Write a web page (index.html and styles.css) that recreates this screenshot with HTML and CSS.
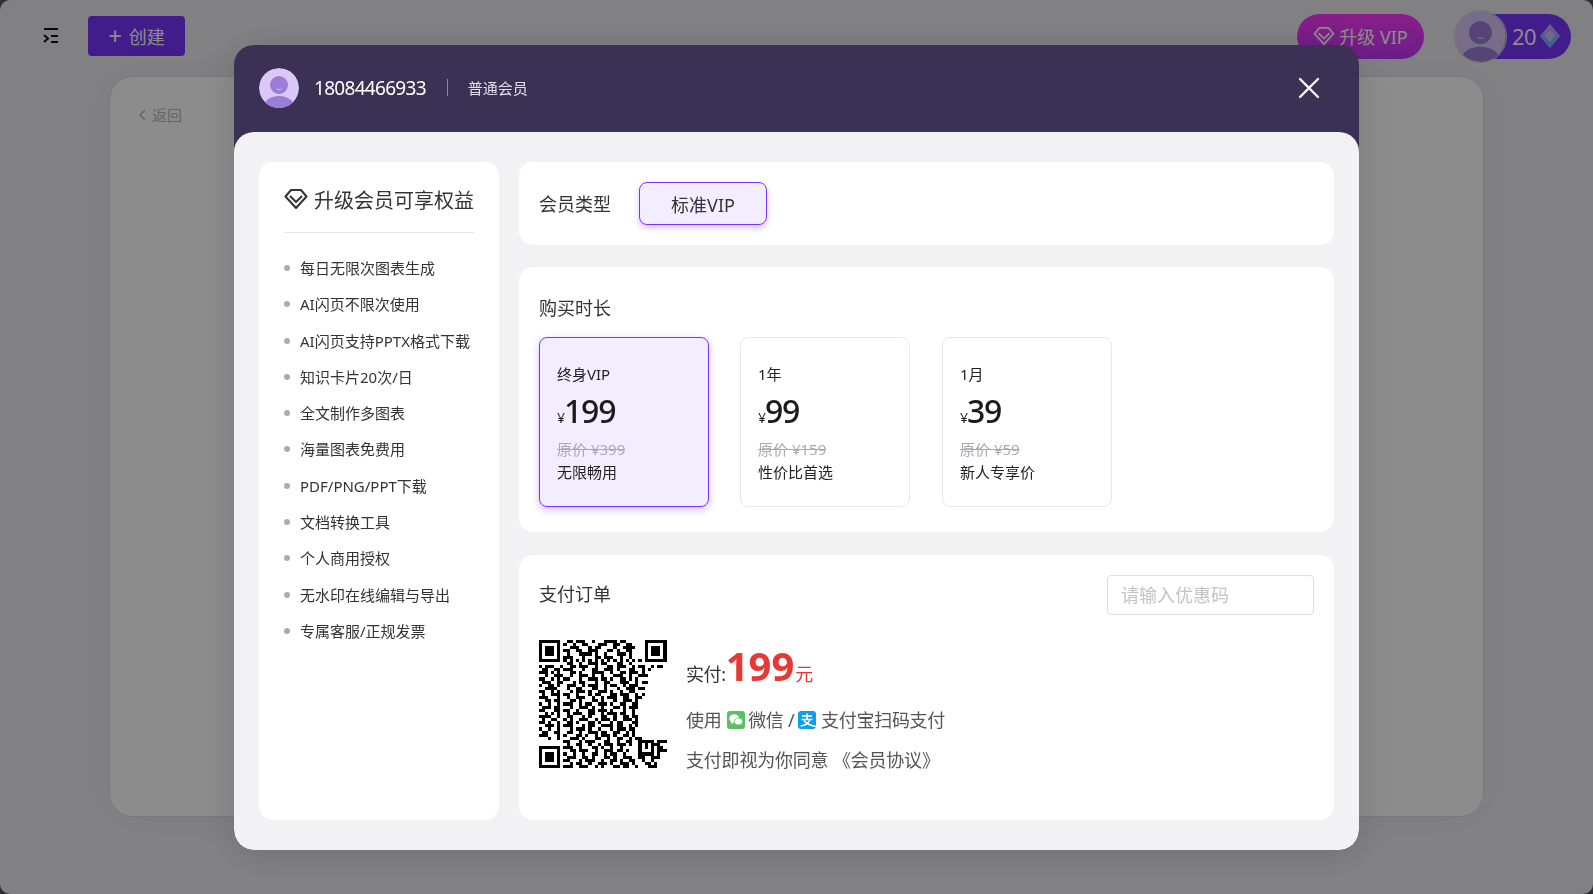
FILE: index.html
```html
<!DOCTYPE html>
<html lang="zh">
<head>
  <meta charset="utf-8">
  <title>升级会员</title>
  <link rel="stylesheet" href="styles.css">
</head>
<body>

<div class="page">
  <div class="topbar">
    <svg class="menu-icon" width="16" height="16" viewBox="0 0 16 16" fill="none" stroke="#111" stroke-width="2">
      <path d="M1 1h14M8 8h7M8 14h7M1 7l4 3.500L1 14"/>
    </svg>
    <div class="create-btn"><span class="plus">+</span>创建</div>
    <div class="spacer"></div>
    <div class="vip-btn">
      <svg width="22" height="20" viewBox="0 0 24 22" fill="none" stroke="#fff" stroke-width="2" stroke-linejoin="round" stroke-linecap="round">
        <path d="M7 2h10l5.500 6.500L12 20 1.500 8.500z"/><path d="M6.500 8.500l5.500 5.500 5.500-5.500"/>
      </svg>
      升级 VIP
    </div>
    <svg class="top-avatar" width="51" height="51" viewBox="0 0 40 40">
      <use href="#avatar"/>
    </svg>
    <div class="credits">
      <span>20</span>
      <svg width="20" height="24" viewBox="0 0 20 24">
        <path d="M10 0l10 12-10 12L0 12z" fill="#b9a6ff"/>
        <path d="M10 12l10 0-10 12L0 12z" fill="#7ab0ff"/>
        <path d="M10 6l5 6-5 6-5-6z" fill="#f0c8ff" opacity=".7"/>
      </svg>
    </div>
  </div>
  <div class="main-card">
    <div class="back-link">
      <svg width="8" height="12" viewBox="0 0 8 12" fill="none" stroke="#bbb" stroke-width="1.500"><path d="M7 1L2 6l5 5"/></svg>
      返回
    </div>
  </div>
</div>

<div class="mask">
  <div class="modal">
    <div class="modal-head">
      <svg width="40" height="40" viewBox="0 0 40 40">
        <defs>
          <clipPath id="avatar-clip"><circle cx="20" cy="20" r="20"/></clipPath>
          <g id="avatar" clip-path="url(#avatar-clip)">
            <circle cx="20" cy="20" r="20" fill="#dbc7f8"/>
            <circle cx="20" cy="17" r="9" fill="#9b7dd6"/>
            <ellipse cx="20" cy="38" rx="15" ry="10" fill="#9b7dd6"/>
            <path d="M17.500 20.500c1 1.500 4 1.500 5 0" fill="none" stroke="#dbc7f8" stroke-width=".8"/>
          </g>
        </defs>
        <use href="#avatar"/>
      </svg>
      <span class="phone">18084466933</span>
      <span class="head-line"></span>
      <span class="level">普通会员</span>
      <svg class="close-icon" width="20" height="20" viewBox="0 0 20 20" stroke="#fff" stroke-width="2.400" stroke-linecap="round">
        <path d="M1 1l18 18M19 1L1 19"/>
      </svg>
    </div>

    <div class="modal-body">
      <div class="side-card">
        <div class="side-title">
          <svg width="24" height="22" viewBox="0 0 24 22" fill="none" stroke="#333" stroke-width="2" stroke-linejoin="round" stroke-linecap="round">
            <path d="M7 2h10l5.500 6.500L12 20 1.500 8.500z"/><path d="M6.500 8.500l5.500 5.500 5.500-5.500"/>
          </svg>
          升级会员可享权益
        </div>
        <ul class="side-list">
          <li>每日无限次图表生成</li>
          <li>AI闪页不限次使用</li>
          <li>AI闪页支持PPTX格式下载</li>
          <li>知识卡片20次/日</li>
          <li>全文制作多图表</li>
          <li>海量图表免费用</li>
          <li>PDF/PNG/PPT下载</li>
          <li>文档转换工具</li>
          <li>个人商用授权</li>
          <li>无水印在线编辑与导出</li>
          <li>专属客服/正规发票</li>
        </ul>
      </div>

      <div class="right-col">
        <div class="card type-card">
          <span class="card-title">会员类型</span>
          <div class="type-btn">标准VIP</div>
        </div>

        <div class="card plan-card">
          <div class="card-title">购买时长</div>
          <div class="plans">
            <div class="plan active">
              <div class="plan-name">终身VIP</div>
              <div class="plan-price"><small>¥</small>199</div>
              <div class="plan-old">原价 ¥399</div>
              <div class="plan-note">无限畅用</div>
            </div>
            <div class="plan">
              <div class="plan-name">1年</div>
              <div class="plan-price"><small>¥</small>99</div>
              <div class="plan-old">原价 ¥159</div>
              <div class="plan-note">性价比首选</div>
            </div>
            <div class="plan">
              <div class="plan-name">1月</div>
              <div class="plan-price"><small>¥</small>39</div>
              <div class="plan-old">原价 ¥59</div>
              <div class="plan-note">新人专享价</div>
            </div>
          </div>
        </div>

        <div class="card pay-card">
          <div class="pay-head">
            <span class="card-title">支付订单</span>
            <input class="coupon" placeholder="请输入优惠码">
          </div>
          <div class="pay-row">
            <svg class="qr" width="129" height="128" viewBox="0 0 41 41" shape-rendering="crispEdges" fill="none" stroke="#000">
              <path d="M0 .5h7M34 .5h7M0 6.500h7M34 6.500h7M0 34.500h7M0 40.500h7M.5 0v7M6.500 0v7M34.500 0v7M40.500 0v7M.5 34v7M6.500 34v7"/>
              <path stroke-width="3" d="M2 3.500h3M36 3.500h3M2 37.500h3"/>
              <path d="M32 32.500h5M32 36.500h5M32.500 32v5M36.500 32v5M34 34.500h1"/>
              <path d="M9 .5h2m1 0h3m2 0h1m3 0h4m1 0h2
                M8 1.500h1m2 0h1m2 0h2m3 0h3m2 0h2m2 0h2
                M10 2.500h3m3 0h1m1 0h2m4 0h1m2 0h4
                M8 3.500h2m2 0h2m2 0h3m3 0h2m1 0h1m2 0h2
                M9 4.500h1m3 0h4m1 0h1m2 0h1m3 0h3m1 0h1
                M8 5.500h3m3 0h1m3 0h2m1 0h3m2 0h1m2 0h1
                M8 6.500h1m1 0h1m1 0h1m1 0h1m1 0h1m1 0h1m1 0h1m1 0h1m1 0h1m1 0h1m1 0h1m1 0h1m1 0h1
                M9 7.500h2m2 0h1m2 0h3m1 0h2m3 0h2m2 0h1
                M0 8.500h1m1 0h3m2 0h1m2 0h2m1 0h3m2 0h1m3 0h2m1 0h3m2 0h1m1 0h2m2 0h1m1 0h2
                M1 9.500h2m2 0h2m1 0h3m3 0h1m2 0h2m2 0h3m1 0h1m3 0h2m2 0h1m1 0h1
                M0 10.500h3m1 0h1m1 0h1m3 0h2m1 0h1m3 0h4m2 0h1m2 0h2m1 0h3m1 0h1
                M2 11.500h1m2 0h3m2 0h1m2 0h3m1 0h1m2 0h1m3 0h3m2 0h1m2 0h3
                M0 12.500h2m2 0h1m1 0h1m1 0h2m3 0h1m2 0h3m1 0h2m1 0h1m2 0h2m1 0h1m1 0h1
                M1 13.500h3m2 0h2m3 0h1m1 0h2m3 0h1m2 0h2m3 0h3m2 0h1m1 0h2
                M0 14.500h1m2 0h2m1 0h1m2 0h3m2 0h1m1 0h3m2 0h1m1 0h2m2 0h1m1 0h3
                M2 15.500h4m3 0h1m2 0h2m3 0h2m2 0h1m3 0h1m2 0h3m1 0h2
                M0 16.500h2m2 0h1m1 0h1m3 0h1m1 0h3m1 0h1m2 0h3m1 0h1m2 0h1m2 0h2
                M1 17.500h1m2 0h3m1 0h2m2 0h1m3 0h1m1 0h2m3 0h2m1 0h3m2 0h1m1 0h1
                M0 18.500h3m3 0h1m2 0h1m2 0h3m2 0h1m2 0h1m1 0h3m2 0h2m2 0h2
                M2 19.500h2m1 0h2m3 0h2m1 0h1m3 0h2m1 0h1m3 0h1m2 0h3m1 0h1
                M0 20.500h1m2 0h1m2 0h1m1 0h3m2 0h1m1 0h2m2 0h3m1 0h1m2 0h2m2 0h2
                M1 21.500h3m1 0h2m3 0h1m2 0h3m1 0h1m2 0h1m3 0h2m1 0h1m1 0h3
                M0 22.500h2m3 0h2m1 0h2m2 0h1m3 0h2m1 0h3m1 0h1m3 0h1m2 0h1
                M2 23.500h1m1 0h1m1 0h1m2 0h1m1 0h3m2 0h2m2 0h1m1 0h3m1 0h2m2 0h1
                M0 24.500h4m2 0h1m2 0h2m3 0h1m1 0h1m3 0h2m2 0h1m2 0h2m1 0h2
                M1 25.500h1m2 0h2m2 0h1m1 0h1m2 0h3m2 0h1m1 0h3m1 0h1m2 0h3m1 0h1
                M0 26.500h2m1 0h1m2 0h1m2 0h2m1 0h1m3 0h2m1 0h1m3 0h1m1 0h2m3 0h2
                M2 27.500h3m1 0h1m1 0h3m3 0h1m1 0h2m2 0h4m1 0h2m2 0h1m1 0h1
                M0 28.500h1m2 0h1m2 0h1m3 0h1m1 0h3m1 0h1m2 0h1m3 0h1m1 0h3m1 0h2
                M1 29.500h2m2 0h2m2 0h2m2 0h1m2 0h3m1 0h2m2 0h2m2 0h1m1 0h1
                M0 30.500h3m3 0h1m1 0h1m3 0h2m1 0h1m2 0h1m1 0h3m1 0h1m2 0h2m1 0h1
                M3 31.500h1m2 0h1m3 0h3m1 0h1m3 0h2m2 0h1m2 0h2m2 0h1m1 0h2
                M8 32.500h2m3 0h1m1 0h3m3 0h2m2 0h1m2 0h2M38 32.500h3
                M9 33.500h1m2 0h2m2 0h1m2 0h1m1 0h3m1 0h3m1 0h1m4 0h1m2 0h2
                M8 34.500h3m2 0h1m3 0h2m1 0h1m2 0h1m2 0h1M38 34.500h2
                M10 35.500h2m1 0h3m2 0h1m2 0h3m1 0h2m1 0h1M38 35.500h3
                M8 36.500h1m2 0h1m2 0h1m2 0h2m2 0h1m1 0h2m2 0h1M38 36.500h1
                M9 37.500h3m2 0h2m1 0h1m3 0h2m1 0h1m2 0h3m2 0h2m2 0h3
                M8 38.500h2m3 0h1m1 0h3m2 0h1m2 0h2m1 0h1m2 0h2m2 0h1m2 0h1
                M10 39.500h1m1 0h2m2 0h1m2 0h3m1 0h1m2 0h3m1 0h1m3 0h2m1 0h1
                M8 40.500h3m2 0h3m2 0h1m1 0h1m3 0h2m1 0h2m2 0h1m3 0h3"/>
            </svg>
            <div class="pay-info">
              <div class="pay-amount">实付:<strong>199</strong><em>元</em></div>
              <div class="pay-line pay-methods">
                使用
                <svg class="pay-icon" width="18" height="18" viewBox="0 0 18 18">
                  <rect width="18" height="18" rx="3" fill="#5cbf66"/>
                  <ellipse cx="7.200" cy="7.500" rx="5" ry="4.200" fill="#fff"/>
                  <path d="M4.500 10.500l-.5 2.500 3-1.500z" fill="#fff"/>
                  <ellipse cx="11.500" cy="10.500" rx="4.200" ry="3.400" fill="#fff" stroke="#5cbf66" stroke-width=".8"/>
                </svg>
                微信 /
                <svg class="pay-icon alipay" width="18" height="18" viewBox="0 0 18 18">
                  <rect width="18" height="18" rx="3" fill="#0f9fe8"/>
                  <path d="M4 5h10M9 2.500V8M3.500 8.500h11M12 8.500c-1.500 4-5 6-9.500 6.500M6 9.500c2 3 6 5 12 6" fill="none" stroke="#fff" stroke-width="1.500"/>
                </svg>
                支付宝扫码支付
              </div>
              <div class="pay-line">支付即视为你同意 《会员协议》</div>
            </div>
          </div>
        </div>
      </div>
    </div>
  </div>
</div>

</body>
</html>
```

FILE: styles.css
```css
* {
  box-sizing: border-box;
}
html, body {
  margin: 0;
  height: 100%;
  overflow: hidden;
}
body {
  background: #555;
  font-family: "Noto Sans", "Noto Sans CJK SC", sans-serif;
  color: #333;
}

/* page under the mask */
.page {
  position: relative;
  z-index: 0;
  height: 894px;
  background: #ececf0;
  border-radius: 10px;
  display: flex;
  flex-direction: column;
}
.topbar {
  height: 76px;
  flex: none;
  display: flex;
  align-items: center;
  padding: 0 22px 4px 43px;
}
.menu-icon {
  margin-right: 29px;
}
.create-btn {
  width: 97px;
  height: 40px;
  background: #7a33ff;
  border-radius: 4px;
  color: #fff;
  font-size: 18px;
  display: flex;
  align-items: center;
  justify-content: center;
  gap: 7px;
}
.plus {
  font-size: 24px;
  line-height: 1;
}
.spacer {
  flex: 1;
}
.vip-btn {
  width: 127px;
  height: 45px;
  border-radius: 23px;
  background: linear-gradient(#fb38f7, #c136fb);
  color: #fff;
  font-size: 18px;
  display: flex;
  align-items: center;
  justify-content: center;
  gap: 4px;
  margin-right: 31px;
}
.top-avatar {
  position: relative;
  z-index: 1;
  margin-right: -26px;
  border-radius: 50%;
  box-shadow: 0 0 0 1px #ccc;
}
.credits {
  width: 91px;
  height: 45px;
  padding-left: 32px;
  border-radius: 0 23px 23px 0;
  background: #7a33ff;
  color: #fff;
  font-size: 22px;
  letter-spacing: -.5px;
  display: flex;
  align-items: center;
  gap: 4px;
}
.main-card {
  width: 1375px;
  height: 741px;
  margin-left: 109px;
  background: #fff;
  border-radius: 24px;
  border: 1px solid #ddd;
  box-shadow: 0 0 40px rgba(0, 0, 0, .04);
  padding: 28px 28px;
}
.back-link {
  display: flex;
  align-items: center;
  gap: 6px;
  font-size: 15px;
  line-height: 20px;
  color: #bbb;
}

/* modal */
.mask {
  position: fixed;
  inset: 0;
  background: rgba(0, 0, 0, .45);
  display: flex;
  justify-content: center;
  align-items: flex-start;
  padding-top: 45px;
}
.modal {
  width: 1125px;
  height: 805px;
  background: #3a3154;
  border-radius: 20px;
  overflow: hidden;
  display: flex;
  flex-direction: column;
  box-shadow: 0 4px 40px rgba(0, 0, 0, .15);
}
.modal-head {
  height: 87px;
  flex: none;
  display: flex;
  align-items: center;
  padding: 0 40px 2px 25px;
  color: #fff;
}
.phone {
  margin-left: 15px;
  font-size: 19px;
  letter-spacing: -.7px;
}
.head-line {
  width: 1px;
  height: 17px;
  margin: 0 20px 0 21px;
  background: #8c84a3;
}
.level {
  font-size: 15px;
  color: #e0deea;
}
.close-icon {
  margin-left: auto;
}
.modal-body {
  flex: 1;
  min-height: 0;
  background: #f2f2f5;
  border-radius: 20px;
  padding: 30px 25px;
  display: flex;
  gap: 20px;
}
.side-card {
  width: 240px;
  flex: none;
  background: #fff;
  border-radius: 14px;
  padding: 20px 25px;
}
.side-title {
  display: flex;
  align-items: center;
  gap: 6px;
  height: 50px;
  padding-bottom: 16px;
  font-size: 20px;
  white-space: nowrap;
}
.side-list {
  list-style: none;
  margin: 0;
  padding: 17px 0 0;
  border-top: 1px solid #e6e6ea;
}
.side-list li {
  position: relative;
  height: 36.300px;
  line-height: 36.300px;
  padding-left: 16px;
  font-size: 15px;
  white-space: nowrap;
}
.side-list li::before {
  content: "";
  position: absolute;
  left: 0;
  top: 15px;
  width: 6px;
  height: 6px;
  border-radius: 50%;
  background: #aba9bb;
}
.right-col {
  flex: 1;
  display: flex;
  flex-direction: column;
  gap: 22px;
}
.card {
  background: #fff;
  border-radius: 14px;
  padding: 20px;
}
.card-title {
  font-size: 18px;
  line-height: 28px;
}
.type-card {
  height: 83px;
  display: flex;
  align-items: center;
  gap: 28px;
  padding: 0 20px;
}
.type-btn {
  width: 128px;
  height: 43px;
  border: 1px solid #7a33ff;
  border-radius: 8px;
  background: #f2eeff;
  box-shadow: 0 3px 6px rgba(122, 51, 255, .3);
  font-size: 18px;
  display: flex;
  align-items: center;
  justify-content: center;
}
.plan-card {
  height: 265px;
  margin-bottom: 1px;
  padding-top: 27px;
}
.plans {
  display: flex;
  gap: 31px;
  margin-top: 15px;
}
.plan {
  width: 170px;
  height: 170px;
  border: 1px solid #e8e8ec;
  border-radius: 8px;
  padding: 26px 17px 0;
  color: #222;
}
.plan:last-child {
  margin-left: 1px;
}
.plan.active {
  border-color: #7a33ff;
  background: #f2eeff;
  box-shadow: 0 3px 8px rgba(122, 51, 255, .3);
}
.plan-name {
  font-size: 15px;
  line-height: 20px;
}
.plan-price {
  margin-top: 7px;
  font-size: 32px;
  line-height: 40px;
  font-weight: 500;
  letter-spacing: -1.200px;
  color: #1a1a1a;
}
.plan-price small {
  font-size: 14px;
  font-weight: 400;
  letter-spacing: 0;
  margin-right: -1px;
}
.plan-old {
  margin-top: -1px;
  font-size: 15px;
  line-height: 24px;
  color: #aaa8b4;
  text-decoration: line-through;
}
.plan-note {
  margin-top: -1px;
  font-size: 15px;
  line-height: 24px;
}
.pay-card {
  flex: 1;
  min-height: 0;
  padding-top: 19px;
}
.pay-head {
  display: flex;
  align-items: center;
  justify-content: space-between;
  margin-bottom: 1px;
}
.pay-head .card-title {
  margin-top: -1px;
}
.coupon {
  width: 207px;
  height: 40px;
  margin-top: 1px;
  border: 1px solid #dcdcdf;
  border-radius: 4px;
  padding: 0 13px;
  font: inherit;
  font-size: 18px;
  outline: none;
}
.coupon::placeholder {
  color: #c4c4c8;
}
.pay-row {
  display: flex;
  gap: 19px;
  margin: 25px 0 0 -1px;
}
.qr {
  flex: none;
}
.pay-info {
  padding-top: 4px;
}
.pay-amount {
  font-size: 18px;
  line-height: 44px;
  height: 56px;
  letter-spacing: -.4px;
}
.pay-amount strong {
  font-size: 40px;
  font-weight: 700;
  letter-spacing: 0;
  color: #e53935;
}
.pay-amount em {
  margin-left: 1px;
  font-style: normal;
  color: #e53935;
}
.pay-line {
  font-size: 18px;
  line-height: 40px;
  letter-spacing: -.2px;
  color: #555;
}
.pay-methods {
  letter-spacing: -.3px;
}
.pay-icon {
  vertical-align: -2px;
  margin: 0 -1px 0 1px;
}
.pay-icon.alipay {
  margin: 0 1px 0 -1px;
}
```
